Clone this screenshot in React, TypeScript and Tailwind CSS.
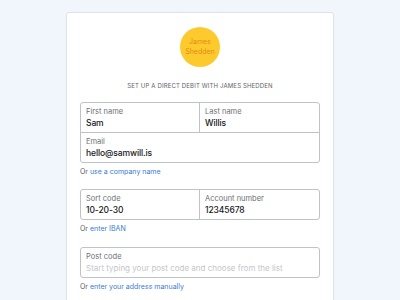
import React from "react";

const font = { fontFamily: 'Inter, "Open Sans", "Liberation Sans", sans-serif' };

function Field({ label, value, placeholder, className = "" }: { label: string; value?: string; placeholder?: string; className?: string }) {
  return (
    <div className={`flex flex-col px-[5px] pt-[3px] pb-[3px] ${className}`}>
      <span className="text-[7.5px] leading-[11px] text-[#6b6f75]">{label}</span>
      {value ? (
        <span className="text-[8.5px] leading-[12px] font-medium tracking-[-0.1px] text-[#16181b]">{value}</span>
      ) : (
        <span className="text-[8px] leading-[12px] text-[#c3c6ca]">{placeholder}</span>
      )}
    </div>
  );
}

function OrLink({ link }: { link: string }) {
  return (
    <div className="mt-[3px] text-[7px] leading-[12px] text-[#55595e]">
      Or <span className="text-[#3a7bd5]">{link}</span>
    </div>
  );
}

export default function App() {
  return (
    <div className="w-[400px] h-[300px] bg-[#f1f6fd] overflow-hidden pt-[12px]" style={font}>
      <div className="ml-[66px] w-[268px] h-[300px] bg-white border border-[#dfe3e8] rounded-[3px] px-[13px] pt-[14px]">
        <div className="flex justify-center">
          <div className="w-[40px] h-[40px] rounded-full bg-[#fdca2e] flex items-center justify-center text-center text-[7px] leading-[10px] text-[#e48a13]">
            James<br />Shedden
          </div>
        </div>
        <div className="mt-[14px] text-center text-[6px] leading-[10px] tracking-[0.15px] text-[#5e6268] uppercase">
          Set up a direct debit with James Shedden
        </div>
        <div className="mt-[11px] border border-[#bfc3c8] rounded-[3px]">
          <div className="grid grid-cols-2 border-b border-[#bfc3c8]">
            <Field label="First name" value="Sam" className="border-r border-[#bfc3c8]" />
            <Field label="Last name" value="Willis" />
          </div>
          <Field label="Email" value="hello@samwill.is" />
        </div>
        <OrLink link="use a company name" />
        <div className="mt-[11px] border border-[#bfc3c8] rounded-[3px] grid grid-cols-2">
          <Field label="Sort code" value="10-20-30" className="border-r border-[#bfc3c8]" />
          <Field label="Account number" value="12345678" />
        </div>
        <OrLink link="enter IBAN" />
        <div className="mt-[12px] border border-[#bfc3c8] rounded-[3px]">
          <Field label="Post code" placeholder="Start typing your post code and choose from the list" />
        </div>
        <OrLink link="enter your address manually" />
      </div>
    </div>
  );
}
